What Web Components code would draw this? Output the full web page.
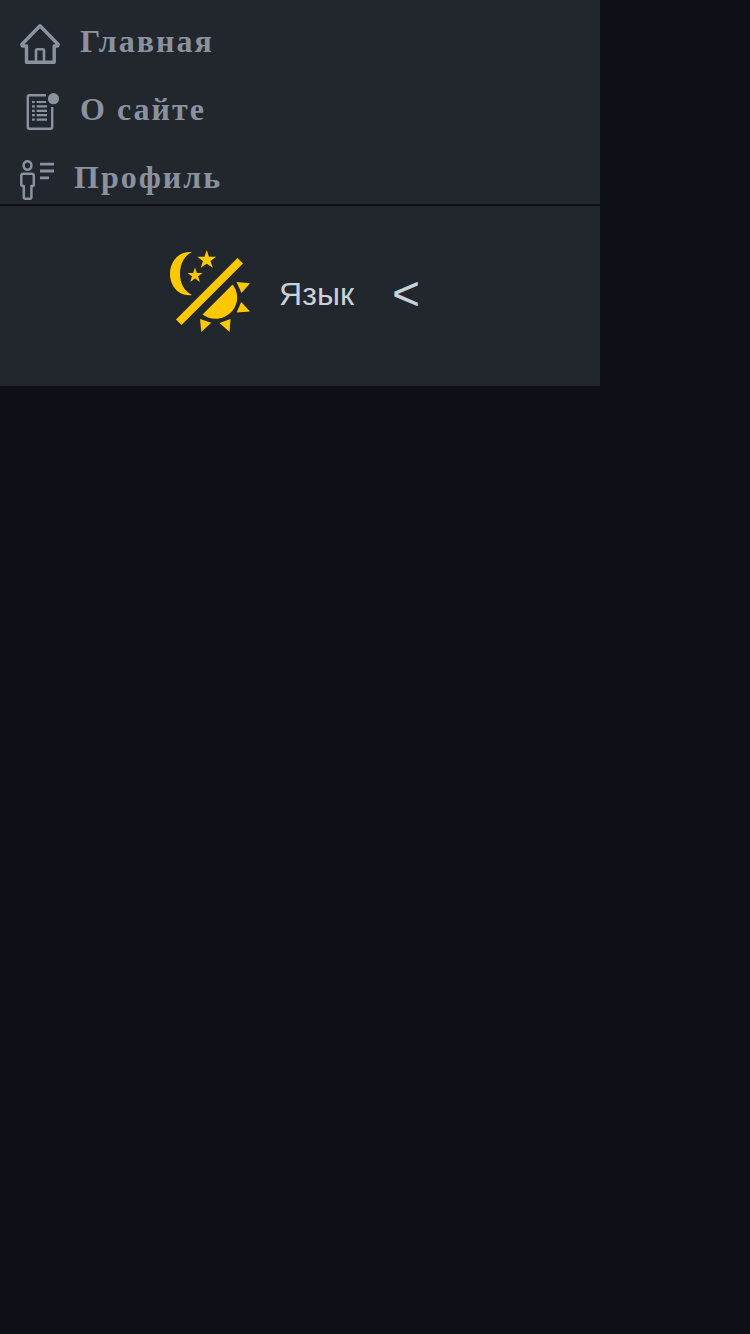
<!DOCTYPE html>
<html lang="ru">
<head>
<meta charset="utf-8">
<meta name="viewport" content="width=device-width, initial-scale=1">
<title>Меню</title>
<style>
  body { margin: 0; min-height: 100vh; background: #0d1117; }
</style>
</head>
<body>
<side-menu>
  <menu-link icon="home">Главная</menu-link>
  <menu-link icon="about">О сайте</menu-link>
  <menu-link icon="profile">Профиль</menu-link>
  <theme-toggle slot="tools"></theme-toggle>
  <language-picker slot="tools">Язык</language-picker>
</side-menu>
<script>
class SideMenu extends HTMLElement {
  constructor() {
    super();
    this.attachShadow({ mode: 'open' }).innerHTML = `
      <style>
        :host { display: block; width: 80%; }
        nav, .tools { background: #22272e; }
        .tools {
          display: flex; align-items: center; justify-content: center;
          box-sizing: border-box; min-height: 180px; padding: 0 10px 10px 0;
          margin-top: 2px;
        }
      </style>
      <nav><slot></slot></nav>
      <div class="tools"><slot name="tools"></slot></div>`;
  }
}

const icons = {
  home: { width: 40, shapes: `
    <g fill="none" stroke="currentColor" stroke-width="3.4" stroke-linejoin="round">
      <path d="M20 1.800L38.200 20.500L37.500 22H34.200V38.300H6.500V22H2.500L1.800 20.500Z"/>
      <path stroke-width="2.6" d="M16 38V26.500Q16 25.300 17 25.300H23Q24 25.300 24 26.500V38"/>
    </g>` },
  about: { width: 40, shapes: `
    <g fill="none" stroke="currentColor" stroke-width="2.4">
      <path d="M26 3.300H9.200Q7.800 3.300 7.800 4.700V35.300Q7.800 36.700 9.200 36.700H30.800Q32.200 36.700 32.200 35.300V15"/>
      <path stroke-width="2.2" d="M12 10H14.800M12 14.400H14.800M12 18.800H14.800M12 23.200H14.800M12 27.700H14.800M16.700 10H26M16.700 14.400H27M16.700 18.800H27M16.700 23.200H27M16.700 27.700H27"/>
    </g>
    <circle cx="33.5" cy="6.7" r="5.6" fill="currentColor"/>` },
  profile: { width: 34, shapes: `
    <g fill="none" stroke="currentColor" stroke-width="2.5" stroke-linejoin="round">
      <ellipse cx="7.5" cy="5.5" rx="3.9" ry="4.3"/>
      <path d="M3.400 13.800H11.600Q13.800 13.800 13.800 16V24.500Q13.800 26 12.400 26H11.400V37.500Q11.400 38.700 10.200 38.700H5Q3.800 38.700 3.800 37.500V26H2.600Q1.300 26 1.300 24.500V16Q1.300 13.800 3.400 13.800Z"/>
      <path stroke-width="2.8" d="M20 4.200H34M20 11H34M20 17.800H29"/>
    </g>` }
};

class MenuLink extends HTMLElement {
  constructor() { super(); this.attachShadow({ mode: 'open' }); }
  connectedCallback() {
    const { width, shapes } = icons[this.getAttribute('icon')];
    this.shadowRoot.innerHTML = `
      <style>
        :host { display: block; }
        a {
          display: flex; gap: 20px; box-sizing: border-box;
          height: 68px; padding: 24px 20px 0;
          color: #8b929e; text-decoration: none;
          font: bold 32px/34px "Liberation Serif", serif; letter-spacing: 2px;
        }
        svg { flex: none; height: 40px; }
      </style>
      <a href="#${this.getAttribute('icon')}">
        <svg width="${width}" height="40" viewBox="0 0 ${width} 40" aria-hidden="true">${shapes}</svg>
        <span><slot></slot></span>
      </a>`;
  }
}

class ThemeToggle extends HTMLElement {
  constructor() {
    super();
    this.attachShadow({ mode: 'open' }).innerHTML = `
      <style>
        :host { display: block; }
        button { display: block; padding: 0; border: 0; background: none; color: #ffc800; cursor: pointer; }
        svg { display: block; }
      </style>
      <button type="button" aria-label="Сменить тему">
        <svg width="80" height="82" viewBox="0 0 80 82" fill="currentColor" aria-hidden="true">
          <path d="M22 2C8 1 0 12 0 24C0 36 9 47 22 45C14 41 10 33 10 24C10 14 14 6 22 2Z"/>
          <path d="M36.700 0L39 6.700H46.200L40.500 11L42.800 17.700L36.700 13.700L30.800 17.700L33 11L27.300 6.700H34.500Z"/>
          <path d="M25 17.500L26.900 22.900H32.700L28.100 26.300L29.900 31.900L25 28.600L20.300 31.900L22 26.300L17.500 22.900H23.200Z"/>
          <path d="M67.500 8L73 13.500L11.500 75L6 69.500Z"/>
          <path d="M62.600 34.600C68.500 42 69 53 62.400 60.800C55 69.800 41.500 71.500 32.600 64.600Z"/>
          <path d="M66.500 32L80 33.200L71.500 43Z"/>
          <path d="M71.200 52L80 61.600L66.700 62.400Z"/>
          <path d="M30 69L41.200 72.800L31.300 82Z"/>
          <path d="M60.500 69L59.600 82L49.500 73Z"/>
        </svg>
      </button>`;
  }
}

class LanguagePicker extends HTMLElement {
  constructor() {
    super();
    this.attachShadow({ mode: 'open' }).innerHTML = `
      <style>
        :host { display: block; margin-left: 29px; }
        button {
          display: flex; align-items: center; gap: 38px;
          padding: 5px 0 0; border: 0; background: none; color: #c9d1d9; cursor: pointer;
          font: 32px/40px "Liberation Sans", sans-serif;
        }
        .arrow { font-size: 48px; }
      </style>
      <button type="button" aria-expanded="false"><span><slot></slot></span><span class="arrow">&lt;</span></button>`;
  }
}

customElements.define('side-menu', SideMenu);
customElements.define('menu-link', MenuLink);
customElements.define('theme-toggle', ThemeToggle);
customElements.define('language-picker', LanguagePicker);
</script>
</body>
</html>
